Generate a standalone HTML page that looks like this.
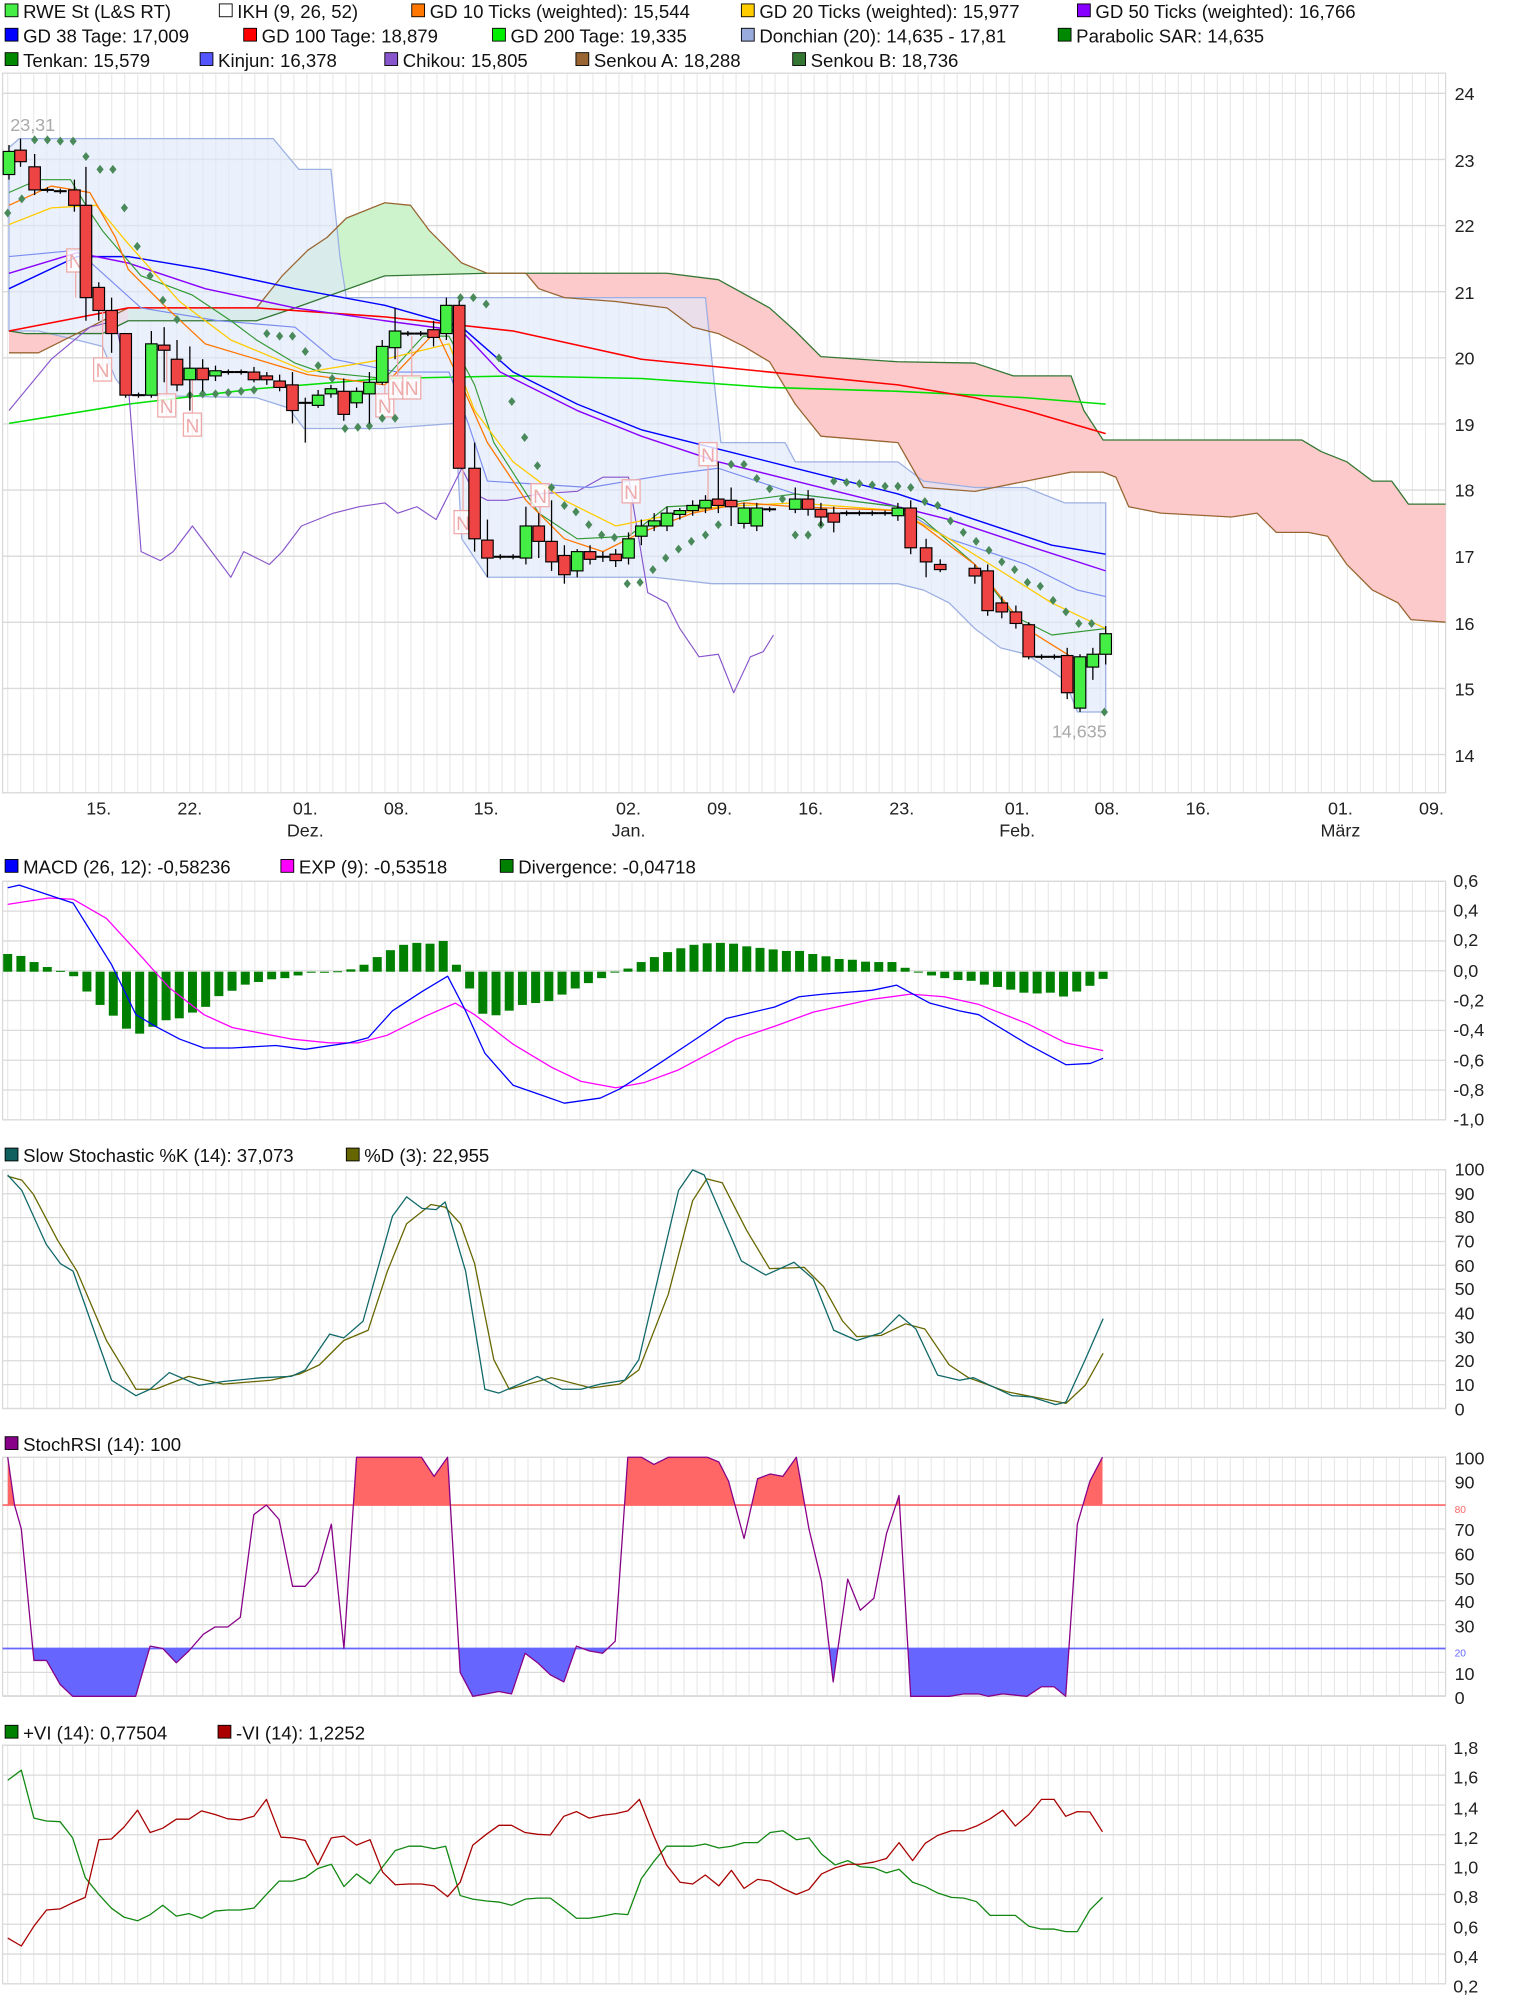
<!DOCTYPE html>
<html><head><meta charset="utf-8"><style>
html,body{margin:0;padding:0;background:#fff;}
svg{display:block;font-family:"Liberation Sans",sans-serif;}
.lg{font-size:14.5px;fill:#111;}
.ax{font-size:14px;fill:#222;}
</style></head><body>
<svg id="s" width="1520" height="2005" viewBox="0 0 1185 1563" xmlns="http://www.w3.org/2000/svg">
<defs>
<clipPath id="cr"><rect x="0" y="1130" width="1130" height="43.2"/></clipPath>
<clipPath id="cb"><rect x="0" y="1284.8" width="1130" height="45"/></clipPath>
</defs>
<rect width="1185" height="1563" fill="#fff"/>
<g id="grid"></g>
<g id="main"></g>
<g id="low"></g>
<!-- legends -->
<g class="lg">
<rect x="4" y="3" width="10" height="10" fill="#44ee44" stroke="#000" stroke-width="0.7"/><text x="18" y="14">RWE St (L&amp;S RT)</text>
<rect x="171" y="3" width="10" height="10" fill="#fff" stroke="#000" stroke-width="0.7"/><text x="185" y="14">IKH (9, 26, 52)</text>
<rect x="321" y="3" width="10" height="10" fill="#ff7700" stroke="#000" stroke-width="0.7"/><text x="335" y="14">GD 10 Ticks (weighted): 15,544</text>
<rect x="578" y="3" width="10" height="10" fill="#ffcc00" stroke="#000" stroke-width="0.7"/><text x="592" y="14">GD 20 Ticks (weighted): 15,977</text>
<rect x="840" y="3" width="10" height="10" fill="#8800ff" stroke="#000" stroke-width="0.7"/><text x="854" y="14">GD 50 Ticks (weighted): 16,766</text>
<rect x="4" y="22" width="10" height="10" fill="#0000ff" stroke="#000" stroke-width="0.7"/><text x="18" y="33">GD 38 Tage: 17,009</text>
<rect x="190" y="22" width="10" height="10" fill="#ff0000" stroke="#000" stroke-width="0.7"/><text x="204" y="33">GD 100 Tage: 18,879</text>
<rect x="384" y="22" width="10" height="10" fill="#00ee00" stroke="#000" stroke-width="0.7"/><text x="398" y="33">GD 200 Tage: 19,335</text>
<rect x="578" y="22" width="10" height="10" fill="#99aadd" stroke="#000" stroke-width="0.7"/><text x="592" y="33">Donchian (20): 14,635 - 17,81</text>
<rect x="825" y="22" width="10" height="10" fill="#008800" stroke="#000" stroke-width="0.7"/><text x="839" y="33">Parabolic SAR: 14,635</text>
<rect x="4" y="41" width="10" height="10" fill="#008800" stroke="#000" stroke-width="0.7"/><text x="18" y="52">Tenkan: 15,579</text>
<rect x="156" y="41" width="10" height="10" fill="#5555ff" stroke="#000" stroke-width="0.7"/><text x="170" y="52">Kinjun: 16,378</text>
<rect x="300" y="41" width="10" height="10" fill="#8855cc" stroke="#000" stroke-width="0.7"/><text x="314" y="52">Chikou: 15,805</text>
<rect x="449" y="41" width="10" height="10" fill="#996633" stroke="#000" stroke-width="0.7"/><text x="463" y="52">Senkou A: 18,288</text>
<rect x="618" y="41" width="10" height="10" fill="#337733" stroke="#000" stroke-width="0.7"/><text x="632" y="52">Senkou B: 18,736</text>

<rect x="4" y="670" width="10" height="10" fill="#0000ff" stroke="#000" stroke-width="0.7"/><text x="18" y="681">MACD (26, 12): -0,58236</text>
<rect x="219" y="670" width="10" height="10" fill="#ff00ff" stroke="#000" stroke-width="0.7"/><text x="233" y="681">EXP (9): -0,53518</text>
<rect x="390" y="670" width="10" height="10" fill="#008000" stroke="#000" stroke-width="0.7"/><text x="404" y="681">Divergence: -0,04718</text>

<rect x="4" y="895" width="10" height="10" fill="#106060" stroke="#000" stroke-width="0.7"/><text x="18" y="906">Slow Stochastic %K (14): 37,073</text>
<rect x="270" y="895" width="10" height="10" fill="#666600" stroke="#000" stroke-width="0.7"/><text x="284" y="906">%D (3): 22,955</text>

<rect x="4" y="1120" width="10" height="10" fill="#880088" stroke="#000" stroke-width="0.7"/><text x="18" y="1131">StochRSI (14): 100</text>

<rect x="4" y="1345" width="10" height="10" fill="#008000" stroke="#000" stroke-width="0.7"/><text x="18" y="1356">+VI (14): 0,77504</text>
<rect x="170" y="1345" width="10" height="10" fill="#aa0000" stroke="#000" stroke-width="0.7"/><text x="184" y="1356">-VI (14): 1,2252</text>
</g>
<!-- axes -->
<g class="ax">
<text x="1134" y="78">24</text><text x="1134" y="130">23</text><text x="1134" y="181">22</text><text x="1134" y="233">21</text><text x="1134" y="284">20</text><text x="1134" y="336">19</text><text x="1134" y="387">18</text><text x="1134" y="439">17</text><text x="1134" y="491">16</text><text x="1134" y="542">15</text><text x="1134" y="594">14</text>
<g text-anchor="middle">
<text x="77" y="635">15.</text><text x="148" y="635">22.</text><text x="238" y="635">01.</text><text x="309" y="635">08.</text><text x="379" y="635">15.</text><text x="490" y="635">02.</text><text x="561" y="635">09.</text><text x="632" y="635">16.</text><text x="703" y="635">23.</text><text x="793" y="635">01.</text><text x="863" y="635">08.</text><text x="934" y="635">16.</text><text x="1045" y="635">01.</text><text x="1116" y="635">09.</text>
<text x="238" y="652">Dez.</text><text x="490" y="652">Jan.</text><text x="793" y="652">Feb.</text><text x="1045" y="652">März</text>
</g>
<g transform="translate(0,-2.5)">
<text x="1133" y="694">0,6</text><text x="1133" y="717">0,4</text><text x="1133" y="740">0,2</text><text x="1133" y="764">0,0</text><text x="1133" y="787">-0,2</text><text x="1133" y="810">-0,4</text><text x="1133" y="834">-0,6</text><text x="1133" y="857">-0,8</text><text x="1133" y="880">-1,0</text>
<text x="1134" y="919">100</text><text x="1134" y="938">90</text><text x="1134" y="956">80</text><text x="1134" y="975">70</text><text x="1134" y="994">60</text><text x="1134" y="1012">50</text><text x="1134" y="1031">40</text><text x="1134" y="1050">30</text><text x="1134" y="1068">20</text><text x="1134" y="1087">10</text><text x="1134" y="1106">0</text>
<text x="1134" y="1144">100</text><text x="1134" y="1163">90</text><text x="1134" y="1200">70</text><text x="1134" y="1219">60</text><text x="1134" y="1238">50</text><text x="1134" y="1256">40</text><text x="1134" y="1275">30</text><text x="1134" y="1312">10</text><text x="1134" y="1331">0</text>
<text x="1134" y="1182" style="font-size:8px;fill:#ff6666">80</text><text x="1134" y="1294" style="font-size:8px;fill:#6666ff">20</text>
<text x="1133" y="1370">1,8</text><text x="1133" y="1393">1,6</text><text x="1133" y="1417">1,4</text><text x="1133" y="1440">1,2</text><text x="1133" y="1463">1,0</text><text x="1133" y="1486">0,8</text><text x="1133" y="1510">0,6</text><text x="1133" y="1533">0,4</text><text x="1133" y="1556">0,2</text>
</g>
</g>
<g id="top"></g>
<text x="8" y="102" style="font-size:14px;fill:#aaa">23,31</text>
<text x="820" y="575" style="font-size:14px;fill:#aaa">14,635</text>
</svg>
<script>
var NS="http://www.w3.org/2000/svg";
function el(p,t,a){var e=document.createElementNS(NS,t);for(var k in a)e.setAttribute(k,a[k]);p.appendChild(e);return e;}
var G=document.getElementById('grid'),M=document.getElementById('main'),L=document.getElementById('low'),T=document.getElementById('top');
var panels=[[57,618],[687,873],[912,1098],[1136,1322],[1360.6,1546.6]];
panels.forEach(function(p){
 for(var x=77-7*10.14;x<1127;x+=10.14){if(x<3)continue;el(G,'line',{x1:x,y1:p[0],x2:x,y2:p[1],stroke:'#e6e6e6','stroke-width':0.8});}
 el(G,'rect',{x:2,y:p[0],width:1125,height:p[1]-p[0],fill:'none',stroke:'#d8d8d8','stroke-width':1});
});
for(var i=0;i<11;i++){var y=72.7+i*51.55;el(G,'line',{x1:2,y1:y,x2:1127,y2:y,stroke:'#dadada','stroke-width':1});}
for(i=0;i<9;i++){y=687+i*23.25;el(G,'line',{x1:2,y1:y,x2:1127,y2:y,stroke:'#dadada'});}
for(i=0;i<11;i++){y=912+i*18.6;el(G,'line',{x1:2,y1:y,x2:1127,y2:y,stroke:'#dadada'});}
for(i=0;i<11;i++){y=1136+i*18.64;el(G,'line',{x1:2,y1:y,x2:1127,y2:y,stroke:'#dadada'});}
for(i=0;i<9;i++){y=1360.6+i*23.25;el(G,'line',{x1:2,y1:y,x2:1127,y2:y,stroke:'#dadada'});}
function pts(a){return a.map(function(p){return p[0]+','+p[1]}).join(' ');}
function pl(p,a,c,w){return el(p,'polyline',{points:pts(a),fill:'none',stroke:c,'stroke-width':w||1,'stroke-linejoin':'round'});}
var SB=[[7,258],[20,260],[80,260],[100,250],[200,250],[230,240],[300,215],[380,213],[410,213],[520,213],[560,218],[600,240],[620,258],[640,278],[700,282],[760,283],[790,293],[835,293],[845,320],[860,343],[1015,343],[1030,352],[1050,360],[1070,375],[1085,375],[1098,393],[1127,393]];
var SA=[[7,275],[30,275],[50,265],[70,255],[100,240],[200,240],[220,215],[240,195],[255,185],[270,170],[300,158],[320,160],[335,180],[360,205],[380,213],[410,213],[420,225],[440,232],[480,235],[520,240],[540,255],[560,260],[580,270],[600,282],[620,315],[640,340],[700,345],[720,380],[760,383],[800,375],[835,368],[860,368],[870,372],[880,395],[905,400],[960,403],[980,400],[995,415],[1020,415],[1035,418],[1050,440],[1070,460],[1090,470],[1100,483],[1127,485]];
el(M,'polygon',{points:pts(SB.concat(SA.slice().reverse())),fill:'#fccaca'});
var ga=SA.filter(function(p){return p[0]>=100&&p[0]<=380});var gb=SB.filter(function(p){return p[0]>=100&&p[0]<=380});
el(M,'polygon',{points:pts(ga.concat(gb.slice().reverse())),fill:'#cdf3cd'});
var DU=[[7,115],[15,108],[213,108],[233,132],[258,132],[265,200],[270,232],[550,232],[557,300],[562,345],[612,345],[620,360],[700,360],[720,375],[760,380],[800,380],[830,392],[862,392]];
var DL=[[862,555],[840,555],[830,530],[800,510],[780,505],[760,490],[740,470],[720,460],[700,455],[555,455],[510,450],[380,450],[360,420],[355,330],[300,334],[237,334],[225,318],[200,310],[100,308],[90,295],[80,270],[60,265],[30,258],[7,258]];
el(M,'polygon',{points:pts(DU.concat(DL)),fill:'#dfe8fa','fill-opacity':0.65,stroke:'#9db0e3','stroke-width':1});
pl(M,SB,'#337733',1);pl(M,SA,'#996633',1);
pl(M,[[7,330],[100,315],[200,303],[300,295],[400,293],[500,295],[600,302],[700,305],[800,310],[862,315]],'#00e000',1.2);
pl(M,[[7,258],[100,240],[200,240],[300,247],[400,258],[500,280],[600,290],[700,300],[760,310],[800,320],[862,338]],'#ff0000',1.2);
pl(M,[[7,225],[60,200],[100,200],[160,210],[230,225],[300,238],[360,255],[400,290],[450,315],[500,335],[560,350],[620,365],[700,385],[760,405],[820,425],[862,432]],'#0000ff',1.1);
pl(M,[[7,213],[60,197],[100,205],[160,225],[230,240],[300,250],[360,258],[390,290],[450,320],[500,340],[560,360],[620,375],[680,390],[740,405],[800,425],[862,445]],'#8800ff',1.1);
pl(M,[[7,320],[40,280],[70,255],[90,250],[100,300],[110,430],[125,437],[135,430],[150,410],[165,430],[180,450],[190,430],[210,440],[220,430],[235,410],[260,400],[280,395],[300,392],[310,400],[325,395],[340,405],[360,365],[370,385],[380,390],[395,390],[420,385],[450,383],[470,372],[490,372],[505,462],[520,470],[530,490],[545,512],[560,510],[572,540],[585,512],[595,508],[603,495]],'#8855cc',0.9);
pl(M,[[7,200],[60,195],[110,240],[170,250],[230,255],[260,280],[310,290],[350,290],[365,330],[380,375],[460,380],[520,370],[560,365],[620,385],[700,395],[740,420],[800,440],[840,460],[862,465]],'#7a8cf0',0.9);
pl(M,[[7,150],[30,140],[55,140],[70,165],[80,180],[110,215],[150,230],[180,250],[200,265],[230,283],[250,290],[300,295],[330,262],[350,262],[370,300],[385,345],[420,400],[450,420],[490,418],[520,395],[560,393],[620,385],[700,395],[720,405],[760,440],[790,480],[820,495],[862,490]],'#339933',0.9);
pl(M,[[7,175],[40,162],[75,160],[100,190],[140,235],[180,265],[240,290],[300,280],[350,268],[370,320],[400,360],[440,390],[480,410],[520,402],[560,395],[620,392],[700,398],[740,420],[780,445],[820,470],[862,490]],'#ffcc00',1);
pl(M,[[7,160],[40,145],[70,150],[90,185],[100,210],[130,240],[160,268],[200,280],[240,292],[300,300],[340,258],[360,300],[380,345],[410,390],[440,420],[470,430],[500,415],[540,400],[580,392],[620,395],[700,398],[720,410],[760,440],[800,490],[840,515],[862,508]],'#ff7700',1);
[[59,203,232],[80,288,240],[130,316,273],[150,331,290],[300,316,300],[310,302,262],[321,302,262],[361,407,365],[421,386,408],[552,354,390],[492,383,418]].forEach(function(n){
 el(M,'line',{x1:n[0],y1:n[1]+8,x2:n[0],y2:n[2],stroke:'#eeaaaa','stroke-width':1});
 el(M,'rect',{x:n[0]-7,y:n[1]-9,width:14,height:18,fill:'#fff','fill-opacity':0.8,stroke:'#eeaaaa'});
 var t=el(M,'text',{x:n[0],y:n[1]+6,'text-anchor':'middle','font-size':15,fill:'#eeaaaa','font-family':'Liberation Sans'});t.textContent='N';
});
[[6,166],[17,155],[27,109],[37,109],[47,110],[57,110],[67,122],[78,132],[88,132],[97,162],[107,192],[117,215],[127,234],[138,249],[148,308],[158,307],[168,307],[178,306],[188,305],[198,304],[208,260],[218,262],[228,262],[238,274],[248,285],[259,295],[269,334],[279,333],[288,332],[298,326],[308,326],[359,232],[369,232],[379,237],[389,279],[399,313],[409,341],[419,363],[430,380],[440,394],[449,399],[459,409],[469,417],[479,419],[489,455],[499,454],[509,444],[519,435],[529,428],[539,422],[550,417],[560,409],[570,362],[580,362],[590,373],[600,381],[610,389],[620,417],[630,417],[640,409],[650,375],[660,376],[670,377],[680,378],[690,379],[700,379],[710,380],[721,391],[731,394],[741,406],[751,415],[761,422],[771,429],[781,438],[791,444],[801,454],[811,457],[821,468],[831,477],[841,486],[851,486],[861,555]].forEach(function(d){
 el(T,'polygon',{points:(d[0])+','+(d[1]-3.5)+' '+(d[0]+2.8)+','+d[1]+' '+d[0]+','+(d[1]+3.5)+' '+(d[0]-2.8)+','+d[1],fill:'#4a8a5a'});
});
var C=[[7,'G',118,136,113,140],[16,'R',117,126,108,130],[27,'R',130,148,120,152],[37,'D',148,148,146,150],[47,'D',149,149,147,151],[58,'R',148,160,140,165],[67,'R',160,232,130,250],[77,'R',224,242,220,250],[87,'R',242,260,232,275],[98,'R',260,308,260,310],[108,'D',308,308,306,310],[118,'G',268,308,258,310],[128,'R',269,273,255,298],[138,'R',280,300,265,305],[148,'G',287,296,270,320],[158,'R',287,296,280,305],[168,'G',289,293,285,297],[178,'D',290,290,288,292],[188,'D',290,290,288,292],[198,'R',290,296,286,298],[208,'R',293,296,290,300],[218,'R',297,302,292,305],[228,'R',300,320,290,330],[238,'D',314,314,310,345],[248,'G',308,316,304,318],[258,'G',303,307,300,310],[268,'R',305,323,295,328],[278,'G',305,314,302,318],[288,'G',298,307,290,330],[298,'G',270,298,265,300],[308,'G',258,271,240,280],[318,'D',260,260,258,262],[328,'D',260,260,258,262],[338,'R',257,263,250,270],[348,'G',238,260,232,265],[358,'R',238,365,234,365],[370,'R',365,420,345,430],[380,'R',421,435,405,450],[390,'D',434,434,432,436],[400,'D',434,434,432,436],[410,'G',410,435,395,440],[420,'R',410,422,400,435],[430,'R',422,438,390,445],[440,'R',433,448,425,455],[450,'G',430,445,428,450],[460,'R',430,436,425,440],[470,'D',434,434,430,438],[480,'R',432,437,428,442],[490,'G',420,435,415,440],[500,'G',410,418,405,425],[510,'G',406,410,400,414],[520,'G',400,410,395,414],[530,'G',398,401,396,405],[540,'G',394,398,390,402],[550,'G',390,396,386,400],[560,'R',389,394,360,400],[570,'R',390,395,380,410],[580,'G',396,408,392,412],[590,'G',396,410,392,414],[600,'D',397,397,395,399],[620,'G',389,397,380,400],[630,'R',389,397,382,402],[640,'R',397,403,392,410],[650,'R',400,407,395,415],[660,'D',400,400,398,402],[670,'D',400,400,398,402],[680,'D',400,400,398,402],[690,'D',400,400,398,402],[700,'G',396,402,392,406],[710,'R',396,427,390,432],[722,'R',427,438,420,450],[733,'R',440,444,436,446],[760,'R',443,449,440,455],[770,'R',445,476,440,480],[781,'R',470,477,465,482],[792,'R',477,486,472,490],[802,'R',487,512,485,514],[812,'D',512,512,510,514],[822,'D',512,512,510,514],[832,'R',511,540,505,545],[842,'G',512,552,510,555],[852,'G',510,520,505,530],[862,'G',494,510,488,518]];
C.forEach(function(c){
 el(T,'line',{x1:c[0],y1:c[4],x2:c[0],y2:c[5],stroke:'#000','stroke-width':1});
 if(c[1]=='D'){el(T,'line',{x1:c[0]-5,y1:c[2],x2:c[0]+5,y2:c[2],stroke:'#000','stroke-width':1.6});}
 else el(T,'rect',{x:c[0]-4.5,y:c[2],width:9,height:Math.max(c[3]-c[2],3),fill:c[1]=='G'?'#44ee44':'#ee4444',stroke:'#000','stroke-width':0.9});
});
var H=[272,277,293,306,316,330,370,405,433,467,480,462,445,440,425,410,382,368,352,345,338,335,328,320,319,317,312,300,280,262,248,243,245,238,300,362,428,432,420,405,400,395,378,362,348,335,318,310,293,280,267,257,248,244,243,245,252,256,260,264,264,272,278,285,287,292,293,293,308,318,328,335,340,342,352,358,365,373,375,373,383,370,355,337];
H.forEach(function(z,i){var x=6+i*(854/(H.length-1));var y=662.5+z/3.35;var y0=757.5;
 el(L,'rect',{x:x-3.5,y:Math.min(y,y0),width:7,height:Math.max(Math.abs(y-y0),0.8),fill:'#008000'});});
pl(L,[[6,705],[38,700],[57,701],[83,716],[106,741],[132,770],[159,791],[181,801],[227,810],[257,813],[279,813],[302,807],[332,792],[355,782],[370,791],[400,814],[430,832],[453,843],[480,848],[502,844],[529,834],[574,810],[604,800],[634,789],[680,779],[710,775],[736,777],[763,783],[801,798],[831,813],[860,819]],'#ff00ff',1);
pl(L,[[6,692],[15,690],[57,704],[72,728],[87,752],[106,791],[121,800],[140,810],[159,817],[181,817],[215,815],[238,818],[272,813],[287,809],[306,788],[329,773],[349,761],[363,788],[378,821],[400,846],[423,854],[440,860],[468,856],[483,849],[514,829],[544,809],[566,794],[604,785],[623,777],[642,775],[680,772],[699,768],[725,782],[748,788],[763,791],[801,814],[831,830],[850,829],[860,825]],'#0000ff',1);
pl(L,[[6,917],[17,920],[26,931],[45,967],[60,991],[83,1045],[106,1083],[121,1083],[147,1073],[174,1079],[211,1076],[234,1071],[249,1064],[268,1045],[287,1037],[302,991],[317,954],[336,939],[347,941],[359,954],[370,985],[385,1060],[397,1083],[430,1074],[461,1082],[483,1079],[498,1068],[521,1009],[540,936],[551,919],[563,922],[582,959],[600,989],[627,988],[642,1003],[657,1030],[668,1042],[687,1041],[706,1032],[721,1036],[740,1064],[755,1074],[785,1085],[816,1091],[831,1094],[846,1080],[860,1055]],'#666600',1);
pl(L,[[6,916],[17,928],[36,970],[47,985],[57,991],[76,1045],[87,1076],[106,1088],[117,1083],[132,1070],[155,1080],[174,1077],[204,1074],[227,1073],[238,1068],[257,1040],[268,1043],[283,1030],[306,948],[317,933],[329,942],[340,943],[347,937],[363,991],[378,1083],[389,1086],[419,1073],[438,1083],[453,1083],[468,1079],[487,1076],[498,1060],[529,928],[540,912],[549,916],[578,983],[597,994],[608,989],[619,984],[634,997],[650,1037],[668,1045],[687,1039],[701,1025],[714,1036],[731,1072],[748,1076],[759,1074],[789,1088],[804,1089],[823,1095],[831,1093],[846,1060],[860,1028]],'#106868',1);
var R=[[8,100],[15,80],[22,70],[35,15],[48,15],[62,5],[75,0],[140,0],[155,21],[168,20],[182,14],[195,19],[210,26],[222,29],[235,29],[248,33],[262,76],[275,80],[288,74],[302,46],[315,46],[328,52],[342,72],[355,20],[368,100],[435,100],[448,92],[462,100],[475,10],[488,0],[502,1],[515,2],[528,1],[542,18],[555,14],[568,9],[582,6],[595,21],[608,19],[622,18],[635,23],[648,100],[662,100],[675,97],[690,100],[730,100],[742,98],[752,90],[768,66],[782,91],[795,93],[808,92],[822,100],[835,70],[848,48],[860,6],[875,49],[888,36],[902,41],[915,68],[928,84],[940,0],[980,0],[995,1],[1010,1],[1020,0],[1035,1],[1060,0],[1075,4],[1088,4],[1100,0],[1112,72],[1125,90],[1138,100]].map(function(p){return [p[0]/1.324,1136+(100-p[1])*1.864];});
var y80=1136+20*1.864,y20=1136+80*1.864;
el(L,'polygon',{points:pts([[R[0][0],y80]].concat(R).concat([[R[R.length-1][0],y80]])),fill:'#ff6666','clip-path':'url(#cr)'});
el(L,'polygon',{points:pts([[R[0][0],y20]].concat(R).concat([[R[R.length-1][0],y20]])),fill:'#6666ff','clip-path':'url(#cb)'});
el(L,'line',{x1:2,y1:y80,x2:1127,y2:y80,stroke:'#ff6666','stroke-width':1.3});
el(L,'line',{x1:2,y1:y20,x2:1127,y2:y20,stroke:'#6666ff','stroke-width':1.3});
pl(L,R,'#880088',1);
function vz(a){return a.map(function(p){return [p[0]/1.324,1122.4+p[1]/3.56];});}
pl(L,vz([[8,945],[22,917],[35,1050],[48,1058],[62,1060],[75,1105],[88,1215],[102,1262],[115,1300],[128,1325],[142,1335],[155,1318],[168,1292],[182,1322],[195,1315],[208,1328],[222,1308],[235,1305],[248,1305],[262,1300],[275,1262],[288,1225],[302,1225],[315,1215],[328,1190],[342,1178],[355,1240],[368,1205],[382,1232],[395,1185],[408,1140],[422,1128],[435,1128],[448,1135],[460,1128],[475,1265],[488,1275],[502,1280],[515,1283],[528,1292],[542,1275],[555,1272],[568,1272],[582,1300],[595,1328],[608,1328],[622,1322],[635,1315],[648,1318],[662,1218],[675,1170],[688,1128],[702,1128],[715,1128],[728,1122],[742,1133],[755,1128],[768,1118],[782,1118],[795,1090],[808,1085],[822,1110],[835,1105],[848,1150],[862,1180],[875,1168],[888,1185],[902,1188],[915,1202],[928,1192],[942,1228],[955,1240],[968,1258],[982,1270],[995,1272],[1008,1282],[1022,1320],[1035,1320],[1048,1320],[1062,1350],[1075,1358],[1088,1358],[1100,1365],[1112,1365],[1125,1305],[1138,1270]]),'#118811',1);
pl(L,vz([[8,1383],[22,1405],[35,1350],[48,1305],[62,1302],[75,1285],[88,1270],[102,1110],[115,1108],[128,1075],[142,1028],[155,1090],[168,1078],[182,1053],[195,1053],[208,1030],[222,1040],[235,1052],[248,1055],[262,1045],[275,998],[290,1103],[302,1105],[315,1112],[328,1180],[342,1105],[355,1100],[368,1125],[382,1110],[395,1200],[408,1235],[422,1233],[435,1233],[448,1238],[462,1268],[475,1228],[488,1125],[502,1095],[515,1070],[528,1070],[542,1090],[555,1095],[568,1097],[582,1045],[595,1032],[608,1050],[622,1042],[635,1038],[648,1030],[660,998],[675,1100],[688,1180],[702,1228],[715,1233],[728,1208],[742,1238],[755,1195],[768,1245],[782,1220],[795,1225],[808,1245],[822,1262],[835,1248],[848,1205],[862,1188],[875,1178],[888,1178],[902,1172],[915,1162],[928,1118],[942,1168],[955,1120],[968,1098],[982,1085],[995,1085],[1008,1072],[1022,1052],[1035,1028],[1048,1072],[1062,1040],[1075,998],[1088,998],[1100,1045],[1112,1032],[1125,1033],[1138,1088]]),'#aa0000',1);
</script>
</body></html>
